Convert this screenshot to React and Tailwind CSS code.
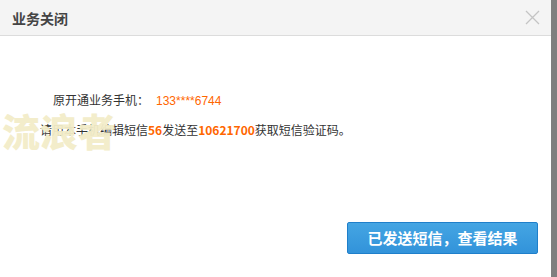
export default function App() {
  return (
    <div className="flex h-[277px] w-[557px] overflow-hidden bg-white font-['Noto_Sans_CJK_SC',sans-serif]">
      <div className="relative flex w-[551px] flex-col">
        <div className="flex h-[36px] items-center justify-between border-b border-[#dcdcdc] bg-[#f4f4f4] pl-[12px] pr-[11px]">
          <span className="text-[14px] font-bold leading-none text-[#444]">业务关闭</span>
          <svg width="15" height="15" viewBox="0 0 15 15" className="text-[#c4c4c4]">
            <path d="M1 1L14 14M14 1L1 14" stroke="currentColor" strokeWidth="1.3" fill="none" />
          </svg>
        </div>
        <div className="relative flex-1">
          <div className="pl-[53px] pt-[56px] text-[12px] leading-[16px] text-[#333]">
            原开通业务手机：
            <span className="ml-[7px] font-['Liberation_Sans',sans-serif] text-[#ff6600]">133****6744</span>
          </div>
          <div className="pl-[40px] pt-[13px] text-[12px] leading-[16px] text-[#333]">
            请用本手机编辑短信<span className="font-bold text-[#ff6600]">56</span>发送至
            <span className="font-bold text-[#ff6600]">10621700</span>获取短信验证码。
          </div>
          <div className="pointer-events-none absolute left-[2px] top-[75px] text-[38px] font-black leading-none text-[#f3edc9] opacity-95">
            流浪者
          </div>
          <div className="absolute bottom-[23px] right-[13px]">
            <button className="h-[32px] w-[191px] rounded-[2px] border border-[#1f7fca] bg-gradient-to-b from-[#44a5e3] to-[#3293da] text-[15px] font-bold text-white">
              已发送短信，查看结果
            </button>
          </div>
        </div>
      </div>
      <div className="w-[6px] bg-[#7f7f7f]" />
    </div>
  );
}
